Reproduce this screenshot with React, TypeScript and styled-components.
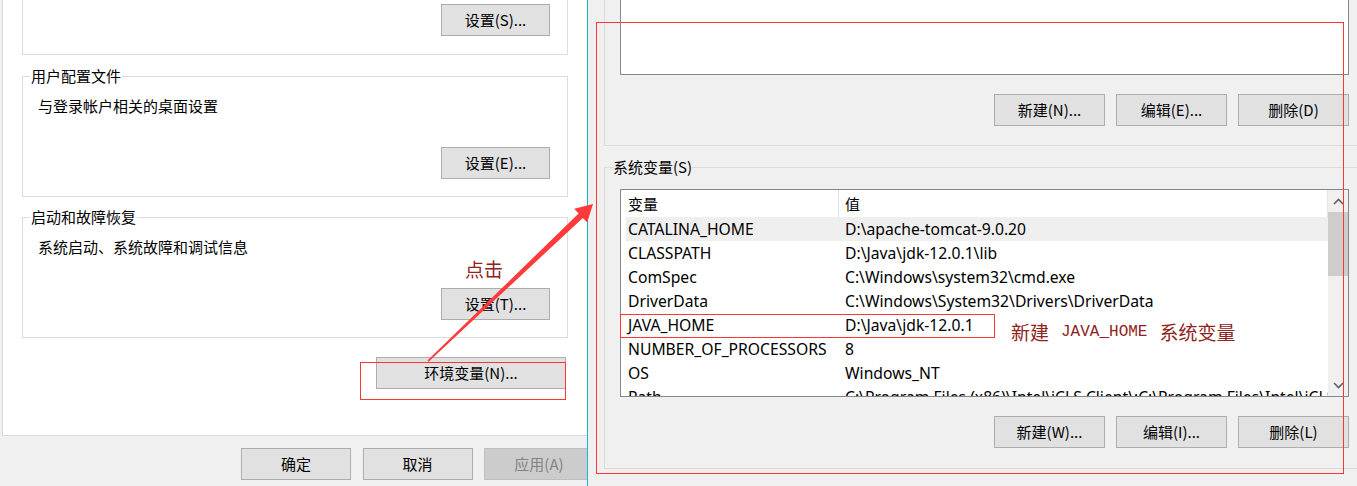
import React from 'react';
import styled, { createGlobalStyle } from 'styled-components';

const GlobalStyle = createGlobalStyle`
  html, body { margin: 0; padding: 0; background: #f0f0f0; }
  body {
    font-family: "Noto Sans CJK SC", "Noto Sans", sans-serif;
    font-size: 15px;
    color: #000;
  }
`;

const Screen = styled.div`
  position: relative;
  width: 1357px;
  height: 486px;
  overflow: hidden;
  display: flex;
  background: #f0f0f0;
`;

/* ---------- left dialog ---------- */
const LeftWindow = styled.div`
  width: 587px;
  flex-shrink: 0;
  overflow: hidden;
  display: flex;
  flex-direction: column;
`;

const TabPage = styled.div`
  margin-left: 2px;
  width: 585px;
  height: 436px;
  box-sizing: border-box;
  background: #fff;
  border-left: 1px solid #d9d9d9;
  border-bottom: 1px solid #d9d9d9;
  padding: 0 19px;
  display: flex;
  flex-direction: column;
  flex-shrink: 0;
`;

const GroupBox = styled.fieldset<{ $clipped?: boolean; $gap?: number }>`
  margin: ${p => p.$gap ?? 0}px 0 0 0;
  min-width: 0;
  border: 1px solid #dcdcdc;
  ${p => (p.$clipped ? 'border-top: none;' : '')}
  padding: ${p => (p.$clipped ? '4px' : '10px')} 17px 17px 7px;
  display: flex;
  flex-direction: column;
  box-sizing: border-box;
  ${p => (p.$clipped ? 'height: 55px;' : '')}
`;

const Legend = styled.legend`
  padding: 0 1px;
  font-size: 15px;
  line-height: 20px;
`;

const Desc = styled.div`
  margin-left: 8px;
  line-height: 20px;
`;

const Button = styled.button<{ $w?: number; $disabled?: boolean }>`
  width: ${p => p.$w ?? 110}px;
  height: 32px;
  flex-shrink: 0;
  box-sizing: border-box;
  background: ${p => (p.$disabled ? '#cccccc' : '#e1e1e1')};
  border: 1px solid ${p => (p.$disabled ? '#bfbfbf' : '#adadad')};
  color: ${p => (p.$disabled ? '#838383' : '#000')};
  font-family: "Noto Sans CJK SC", "Noto Sans", sans-serif;
  font-size: 15px;
  line-height: 20px;
  padding: 0;
  margin: 0;
`;

const GroupButton = styled(Button)<{ $top?: number }>`
  align-self: flex-end;
  margin-top: ${p => p.$top ?? 0}px;
`;

const EnvButton = styled(Button)`
  align-self: flex-end;
  margin-top: 19px;
  margin-right: 2px;
`;

const BottomBar = styled.div`
  flex: 1;
  display: flex;
  gap: 11.5px;
  padding: 12px 0 0 241px;
`;

/* ---------- right dialog ---------- */
const RightWindow = styled.div`
  width: 770px;
  flex-shrink: 0;
  box-sizing: border-box;
  border-left: 1px solid #22b4c8;
  overflow: hidden;
  display: flex;
  flex-direction: column;
  padding-left: 16px;
`;

const VarGroup = styled.fieldset<{ $clipped?: boolean }>`
  margin: ${p => (p.$clipped ? 0 : 11)}px 0 0 0;
  width: 761px;
  min-width: 0;
  flex-shrink: 0;
  box-sizing: border-box;
  border: 1px solid #dcdcdc;
  ${p => (p.$clipped ? 'border-top: none;' : '')}
  padding: ${p => (p.$clipped ? '0 15px 19px 15px' : '12px 15px 20px 8px')};
  display: flex;
  flex-direction: column;
`;

const VarLegend = styled.legend`
  padding: 0;
  font-size: 15px;
  line-height: 20px;
`;

const ListBox = styled.div<{ $h: number; $clipped?: boolean; $indent?: number }>`
  height: ${p => p.$h}px;
  margin-left: ${p => p.$indent ?? 0}px;
  box-sizing: border-box;
  border: 1px solid #828790;
  ${p => (p.$clipped ? 'border-top: none;' : '')}
  background: #fff;
  display: flex;
  overflow: hidden;
`;

const ListContent = styled.div`
  flex: 1;
  min-width: 0;
  display: flex;
  flex-direction: column;
  overflow: hidden;
`;

const HeaderRow = styled.div`
  display: grid;
  grid-template-columns: 218px 1fr;
  height: 27px;
  flex-shrink: 0;
`;

const HeaderCell = styled.div<{ $pad: number }>`
  padding-left: ${p => p.$pad}px;
  line-height: 27px;
  border-right: 1px solid #e5e5e5;
`;

const Row = styled.div<{ $hl?: boolean }>`
  display: grid;
  grid-template-columns: 213px 1fr;
  height: 24px;
  flex-shrink: 0;
  margin-left: 5px;
  line-height: 24px;
  background: ${p => (p.$hl ? '#efefef' : 'transparent')};
`;

const Cell = styled.div<{ $pad: number }>`
  padding-left: ${p => p.$pad}px;
  font-family: "Noto Sans", "Noto Sans CJK SC", sans-serif;
  font-size: 15.7px;
  white-space: nowrap;
  overflow: hidden;
`;

const Scrollbar = styled.div`
  width: 20px;
  flex-shrink: 0;
  background: #f0f0f0;
  display: flex;
  flex-direction: column;
`;

const ScrollArrow = styled.div`
  height: 22px;
  display: flex;
  align-items: center;
  justify-content: center;
  flex-shrink: 0;
`;

const ScrollThumb = styled.div`
  height: 64px;
  background: #cdcdcd;
  flex-shrink: 0;
`;

const ScrollTrack = styled.div`
  flex: 1;
`;

const ButtonRow = styled.div`
  display: flex;
  justify-content: flex-end;
  gap: 11px;
  margin-top: 19px;
`;

/* ---------- annotations ---------- */
const RedBox = styled.div`
  position: absolute;
  box-sizing: border-box;
  border: 1px solid #ff3434;
  pointer-events: none;
`;

const Note = styled.div`
  position: absolute;
  color: #8e2323;
  font-family: "Noto Sans CJK SC", serif;
  font-size: 19px;
  line-height: 22px;
  white-space: nowrap;
  display: flex;
  align-items: center;
`;

const NoteMono = styled.span`
  font-family: "Liberation Mono", "DejaVu Sans Mono", monospace;
  font-size: 16px;
  margin: 0 12px;
`;

const ArrowSvg = styled.svg`
  position: absolute;
  left: 0;
  top: 0;
  pointer-events: none;
`;

const Chevron = ({ down }: { down?: boolean }) => (
  <svg width="11" height="7" viewBox="0 0 11 7">
    <polyline
      points={down ? '1,1 5.5,5.5 10,1' : '1,6 5.5,1.5 10,6'}
      fill="none"
      stroke="#606060"
      strokeWidth="1.6"
    />
  </svg>
);

const rows: [string, string][] = [
  ['CATALINA_HOME', 'D:\\apache-tomcat-9.0.20'],
  ['CLASSPATH', 'D:\\Java\\jdk-12.0.1\\lib'],
  ['ComSpec', 'C:\\Windows\\system32\\cmd.exe'],
  ['DriverData', 'C:\\Windows\\System32\\Drivers\\DriverData'],
  ['JAVA_HOME', 'D:\\Java\\jdk-12.0.1'],
  ['NUMBER_OF_PROCESSORS', '8'],
  ['OS', 'Windows_NT'],
  ['Path', 'C:\\Program Files (x86)\\Intel\\iCLS Client\\;C:\\Program Files\\Intel\\iCLS Client\\;C:\\Windows\\system32'],
];

export default function App() {
  return (
    <>
      <GlobalStyle />
      <Screen>
        <LeftWindow>
          <TabPage>
            <GroupBox $clipped>
              <GroupButton $w={109}>设置(S)...</GroupButton>
            </GroupBox>
            <GroupBox $gap={11}>
              <Legend>用户配置文件</Legend>
              <Desc>与登录帐户相关的桌面设置</Desc>
              <GroupButton $w={109} $top={31}>设置(E)...</GroupButton>
            </GroupBox>
            <GroupBox $gap={10}>
              <Legend>启动和故障恢复</Legend>
              <Desc>系统启动、系统故障和调试信息</Desc>
              <GroupButton $w={109} $top={31}>设置(T)...</GroupButton>
            </GroupBox>
            <EnvButton $w={190}>环境变量(N)...</EnvButton>
          </TabPage>
          <BottomBar>
            <Button>确定</Button>
            <Button>取消</Button>
            <Button $disabled>应用(A)</Button>
          </BottomBar>
        </LeftWindow>

        <RightWindow>
          <VarGroup $clipped>
            <ListBox $h={75} $clipped />
            <ButtonRow>
              <Button $w={111}>新建(N)...</Button>
              <Button $w={111}>编辑(E)...</Button>
              <Button $w={111}>删除(D)</Button>
            </ButtonRow>
          </VarGroup>
          <VarGroup>
            <VarLegend>系统变量(S)</VarLegend>
            <ListBox $h={208} $indent={7}>
              <ListContent>
                <HeaderRow>
                  <HeaderCell $pad={7}>变量</HeaderCell>
                  <HeaderCell $pad={6}>值</HeaderCell>
                </HeaderRow>
                {rows.map(([k, v], i) => (
                  <Row key={k} $hl={i === 0}>
                    <Cell $pad={2}>{k}</Cell>
                    <Cell $pad={6}>{v}</Cell>
                  </Row>
                ))}
              </ListContent>
              <Scrollbar>
                <ScrollArrow>
                  <Chevron />
                </ScrollArrow>
                <ScrollThumb />
                <ScrollTrack />
                <ScrollArrow>
                  <Chevron down />
                </ScrollArrow>
              </Scrollbar>
            </ListBox>
            <ButtonRow>
              <Button $w={111}>新建(W)...</Button>
              <Button $w={111}>编辑(I)...</Button>
              <Button $w={111}>删除(L)</Button>
            </ButtonRow>
          </VarGroup>
        </RightWindow>

        <RedBox style={{ left: 596, top: 22, width: 748, height: 452 }} />
        <RedBox style={{ left: 360, top: 362, width: 206, height: 38 }} />
        <RedBox style={{ left: 620, top: 314, width: 375, height: 24 }} />

        <Note style={{ left: 465, top: 258 }}>点击</Note>
        <Note style={{ left: 1011, top: 321 }}>
          新建<NoteMono>JAVA_HOME</NoteMono>系统变量
        </Note>

        <ArrowSvg width="1357" height="486" viewBox="0 0 1357 486">
          <polygon
            points="427.4,360.6 578.6,213.5 574.2,208.8 593,204 587.2,222.6 582.8,217.9 428.6,361.8"
            fill="#ff3a3a"
          />
        </ArrowSvg>
      </Screen>
    </>
  );
}
